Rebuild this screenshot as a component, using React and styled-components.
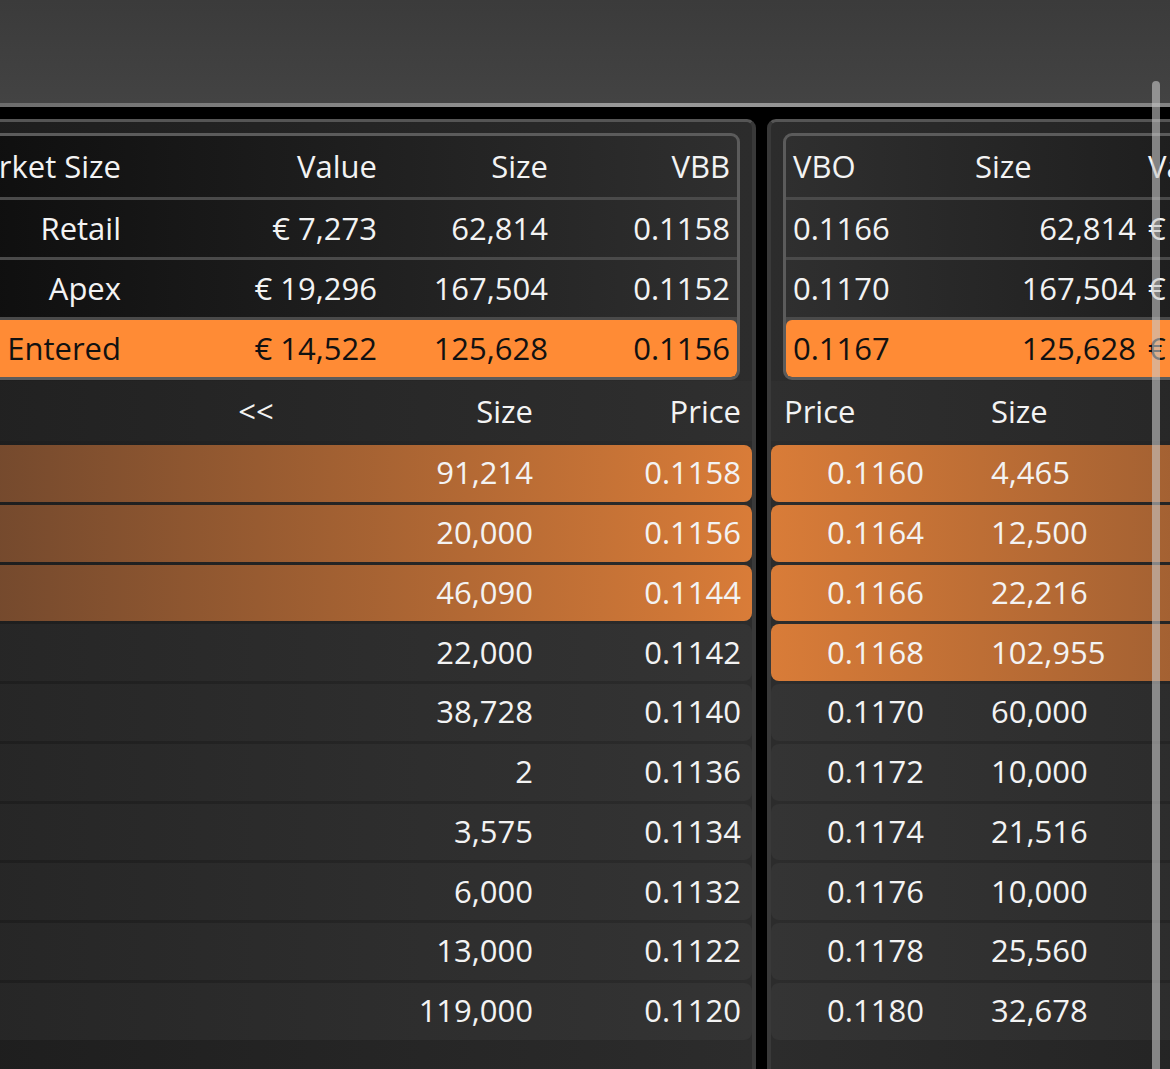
import React from 'react';
import styled, { createGlobalStyle, css } from 'styled-components';

const GlobalStyle = createGlobalStyle`
  html, body {
    margin: 0;
    padding: 0;
    background: #000;
  }
`;

const BID_QUOTE_COLS = '1fr 256px 171px 183px';
const ASK_QUOTE_COLS = '184px 172px 256px 1fr';
const BID_LADDER_COLS = '1fr 160px 208px 208px';
const ASK_LADDER_COLS = '209px 208px 160px 1fr';

const quotes = [
  { name: 'Retail', value: '€ 7,273', size: '62,814', vbb: '0.1158', vbo: '0.1166' },
  { name: 'Apex', value: '€ 19,296', size: '167,504', vbb: '0.1152', vbo: '0.1170' },
  { name: 'Entered', value: '€ 14,522', size: '125,628', vbb: '0.1156', vbo: '0.1167', entered: true }
];

const bids = [
  { size: '91,214', price: '0.1158', hit: true },
  { size: '20,000', price: '0.1156', hit: true },
  { size: '46,090', price: '0.1144', hit: true },
  { size: '22,000', price: '0.1142' },
  { size: '38,728', price: '0.1140' },
  { size: '2', price: '0.1136' },
  { size: '3,575', price: '0.1134' },
  { size: '6,000', price: '0.1132' },
  { size: '13,000', price: '0.1122' },
  { size: '119,000', price: '0.1120' }
];

const asks = [
  { price: '0.1160', size: '4,465', hit: true },
  { price: '0.1164', size: '12,500', hit: true },
  { price: '0.1166', size: '22,216', hit: true },
  { price: '0.1168', size: '102,955', hit: true },
  { price: '0.1170', size: '60,000' },
  { price: '0.1172', size: '10,000' },
  { price: '0.1174', size: '21,516' },
  { price: '0.1176', size: '10,000' },
  { price: '0.1178', size: '25,560' },
  { price: '0.1180', size: '32,678' }
];

const Screen = styled.div`
  position: relative;
  width: 1170px;
  height: 1069px;
  overflow: hidden;
  display: flex;
  flex-direction: column;
  background: #000;
  font-family: 'Open Sans', 'Noto Sans', sans-serif;
  font-size: 31px;
  color: #f3f3f3;
`;

const TopBar = styled.div`
  flex: none;
  height: 103px;
  background: linear-gradient(#3b3b3b, #434343);
`;

const TopEdge = styled.div`
  flex: none;
  height: 4px;
  background: linear-gradient(to right, #6c6c6c, #9a9a9a 55%, #838383);
`;

const Panels = styled.div`
  flex: 1;
  min-height: 0;
  display: flex;
  gap: 11px;
  margin: 12px 0 0 -240px;
`;

const Panel = styled.section`
  flex: none;
  width: 996px;
  box-sizing: border-box;
  display: flex;
  flex-direction: column;
  padding-top: 11px;
  border: 4px solid #393939;
  border-top: 3px solid #555;
  border-bottom: none;
  border-radius: ${p => (p.$side === 'bid' ? '0 9px 0 0' : '9px 0 0 0')};
  background: linear-gradient(to ${p => (p.$side === 'bid' ? 'right' : 'left')}, #1a1a1a, #2c2c2c);
`;

const QuoteBox = styled.div`
  display: flex;
  flex-direction: column;
  gap: 3px;
  margin: ${p => (p.$side === 'bid' ? '0 12px 0 10px' : '0 10px 0 12px')};
  border: 3px solid #5b5b5b;
  border-radius: 9px;
  overflow: hidden;
  background: #4a4a4a;
`;

const QuoteRow = styled.div`
  box-sizing: border-box;
  display: grid;
  grid-template-columns: ${p => p.$cols};
  align-items: center;
  height: ${p => (p.$head ? 61 : 57)}px;
  padding-bottom: 2px;
  background: linear-gradient(to ${p => (p.$side === 'bid' ? 'right' : 'left')}, #060606, #2f2f2f);
  ${p =>
    p.$entered &&
    css`
      background: #ff8b35;
      color: #111;
      border-radius: 6px;
    `}
`;

const Cell = styled.div`
  min-width: 0;
  overflow: hidden;
  white-space: nowrap;
  padding: 0 ${p => p.$pad ?? 6}px;
  text-align: ${p => p.$align ?? 'right'};
`;

const LadderHead = styled.div`
  display: grid;
  grid-template-columns: ${p => p.$cols};
  align-items: center;
  height: 60px;
  margin-top: 1px;
  background: rgba(255, 255, 255, 0.015);
`;

const LadderList = styled.div`
  display: flex;
  flex-direction: column;
  gap: 3px;
  padding-top: 4px;
`;

const LadderRow = styled.div`
  flex: none;
  box-sizing: border-box;
  display: grid;
  grid-template-columns: ${p => p.$cols};
  align-items: center;
  height: 56.75px;
  padding-bottom: 2px;
  border-radius: 8px;
  background: rgba(255, 255, 255, 0.04);
  ${p =>
    p.$hit &&
    css`
      background: linear-gradient(to ${p.$side === 'bid' ? 'right' : 'left'}, #563a2a, #d97c38);
    `}
`;

const ScrollThumb = styled.div`
  position: absolute;
  left: 1152px;
  top: 81px;
  bottom: -10px;
  width: 8px;
  border-radius: 4px;
  background: rgba(200, 200, 200, 0.6);
`;

export default function App() {
  return (
    <>
      <GlobalStyle />
      <Screen>
        <TopBar />
        <TopEdge />
        <Panels>
          <Panel $side="bid">
            <QuoteBox $side="bid">
              <QuoteRow $side="bid" $cols={BID_QUOTE_COLS} $head>
                <Cell>Market Size</Cell>
                <Cell>Value</Cell>
                <Cell>Size</Cell>
                <Cell $pad={7}>VBB</Cell>
              </QuoteRow>
              {quotes.map(q => (
                <QuoteRow key={q.name} $side="bid" $cols={BID_QUOTE_COLS} $entered={q.entered}>
                  <Cell>{q.name}</Cell>
                  <Cell>{q.value}</Cell>
                  <Cell>{q.size}</Cell>
                  <Cell $pad={7}>{q.vbb}</Cell>
                </QuoteRow>
              ))}
            </QuoteBox>
            <LadderHead $cols={BID_LADDER_COLS}>
              <Cell />
              <Cell $align="center">&lt;&lt;</Cell>
              <Cell $pad={11}>Size</Cell>
              <Cell $pad={11}>Price</Cell>
            </LadderHead>
            <LadderList>
              {bids.map((b, i) => (
                <LadderRow key={i} $side="bid" $hit={b.hit} $cols={BID_LADDER_COLS}>
                  <Cell />
                  <Cell />
                  <Cell $pad={11}>{b.size}</Cell>
                  <Cell $pad={11}>{b.price}</Cell>
                </LadderRow>
              ))}
            </LadderList>
          </Panel>

          <Panel $side="ask">
            <QuoteBox $side="ask">
              <QuoteRow $side="ask" $cols={ASK_QUOTE_COLS} $head>
                <Cell $align="left" $pad={7}>VBO</Cell>
                <Cell $align="left" $pad={5}>Size</Cell>
                <Cell $align="left">Value</Cell>
                <Cell $align="left">Market Size</Cell>
              </QuoteRow>
              {quotes.map(q => (
                <QuoteRow key={q.name} $side="ask" $cols={ASK_QUOTE_COLS} $entered={q.entered}>
                  <Cell $align="left" $pad={7}>{q.vbo}</Cell>
                  <Cell>{q.size}</Cell>
                  <Cell $align="left">{q.value}</Cell>
                  <Cell $align="left">{q.name}</Cell>
                </QuoteRow>
              ))}
            </QuoteBox>
            <LadderHead $cols={ASK_LADDER_COLS}>
              <Cell $align="left" $pad={13}>Price</Cell>
              <Cell $align="left" $pad={11}>Size</Cell>
              <Cell $align="center">&gt;&gt;</Cell>
              <Cell />
            </LadderHead>
            <LadderList>
              {asks.map((a, i) => (
                <LadderRow key={i} $side="ask" $hit={a.hit} $cols={ASK_LADDER_COLS}>
                  <Cell $align="center">{a.price}</Cell>
                  <Cell $align="left" $pad={11}>{a.size}</Cell>
                  <Cell />
                  <Cell />
                </LadderRow>
              ))}
            </LadderList>
          </Panel>
        </Panels>
        <ScrollThumb />
      </Screen>
    </>
  );
}
